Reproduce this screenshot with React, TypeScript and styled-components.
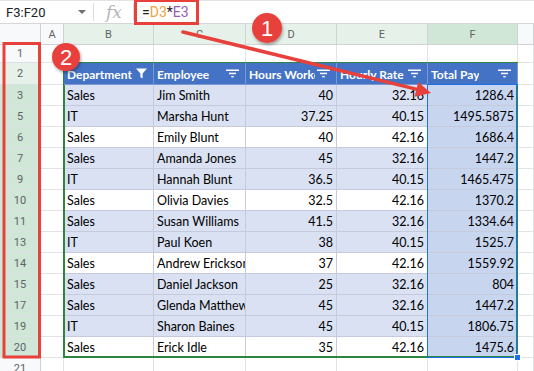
import { FC } from "react";
import styled, { createGlobalStyle } from "styled-components";

type Row = { n: number; dept: string; emp: string; hours: string; rate: string; total: string };
type Tone = "plain" | "light" | "dark";

const rows: Row[] = [
  { n: 3, dept: "Sales", emp: "Jim Smith", hours: "40", rate: "32.16", total: "1286.4" },
  { n: 5, dept: "IT", emp: "Marsha Hunt", hours: "37.25", rate: "40.15", total: "1495.5875" },
  { n: 6, dept: "Sales", emp: "Emily Blunt", hours: "40", rate: "42.16", total: "1686.4" },
  { n: 7, dept: "Sales", emp: "Amanda Jones", hours: "45", rate: "32.16", total: "1447.2" },
  { n: 9, dept: "IT", emp: "Hannah Blunt", hours: "36.5", rate: "40.15", total: "1465.475" },
  { n: 10, dept: "Sales", emp: "Olivia Davies", hours: "32.5", rate: "42.16", total: "1370.2" },
  { n: 11, dept: "Sales", emp: "Susan Williams", hours: "41.5", rate: "32.16", total: "1334.64" },
  { n: 13, dept: "IT", emp: "Paul Koen", hours: "38", rate: "40.15", total: "1525.7" },
  { n: 14, dept: "Sales", emp: "Andrew Erickson", hours: "37", rate: "42.16", total: "1559.92" },
  { n: 15, dept: "Sales", emp: "Daniel Jackson", hours: "25", rate: "32.16", total: "804" },
  { n: 17, dept: "Sales", emp: "Glenda Matthews", hours: "45", rate: "32.16", total: "1447.2" },
  { n: 19, dept: "IT", emp: "Sharon Baines", hours: "45", rate: "40.15", total: "1806.75" },
  { n: 20, dept: "Sales", emp: "Erick Idle", hours: "35", rate: "42.16", total: "1475.6" },
];

const columns: { label: string; tone: Tone }[] = [
  { label: "A", tone: "plain" },
  { label: "B", tone: "light" },
  { label: "C", tone: "light" },
  { label: "D", tone: "light" },
  { label: "E", tone: "light" },
  { label: "F", tone: "dark" },
];

const headers = ["Department", "Employee", "Hours Worked", "Hourly Rate", "Total Pay"];

const toneBg: Record<Tone, string> = {
  plain: "#f8f9fa",
  light: "#e6f2e9",
  dark: "#d0e6d6",
};

const GlobalStyle = createGlobalStyle`
  body {
    margin: 0;
    background: #ffffff;
  }
  * {
    box-sizing: border-box;
  }
`;

const FilterLines: FC = () => (
  <svg width="13" height="9" viewBox="0 0 13 9">
    <rect x="0" y="0.5" width="13" height="1.5" fill="#fff" />
    <rect x="3" y="3.7" width="7" height="1.5" fill="#fff" />
    <rect x="5.3" y="6.9" width="2.4" height="1.5" fill="#fff" />
  </svg>
);

const Funnel: FC = () => (
  <svg width="11" height="11" viewBox="0 0 11 11">
    <path d="M0 0.5 H11 L6.6 5.6 V10.5 L4.4 9.2 V5.6 Z" fill="#fff" />
  </svg>
);

const Annotations: FC = () => (
  <Overlay width="534" height="371" viewBox="0 0 534 371">
    <defs>
      <filter id="shade" x="-40%" y="-40%" width="180%" height="180%">
        <feDropShadow dx="1" dy="2" stdDeviation="1.5" floodColor="#000" floodOpacity="0.35" />
      </filter>
    </defs>
    <rect x="135.5" y="0.5" width="62" height="23" fill="none" stroke="#e8413c" strokeWidth="3" />
    <rect x="4" y="43.5" width="35.5" height="313.5" fill="none" stroke="#e8413c" strokeWidth="3" />
    <line x1="183" y1="32" x2="417" y2="89.4" stroke="#e8413c" strokeWidth="3.5" strokeLinecap="round" />
    <polygon points="431,93 414.6,96.7 418.2,82.1" fill="#e8413c" />
    <g filter="url(#shade)">
      <circle cx="267" cy="28" r="15" fill="#e8413c" />
      <circle cx="66" cy="57" r="14" fill="#e8413c" />
    </g>
    <BadgeText x="267" y="36">1</BadgeText>
    <BadgeText x="66" y="65">2</BadgeText>
  </Overlay>
);

const App: FC = () => {
  return (
    <Frame>
      <GlobalStyle />
      <FormulaBar>
        <NameBox>
          <span>F3:F20</span>
          <Caret />
        </NameBox>
        <FxLabel>fx</FxLabel>
        <Formula>
          =<RefD>D3</RefD>*<RefE>E3</RefE>
        </Formula>
      </FormulaBar>

      <Sheet>
        <ColHead $r={1} $c={1} $tone="plain" />
        {columns.map((col, i) => (
          <ColHead key={col.label} $r={1} $c={i + 2} $tone={col.tone}>
            {col.label}
          </ColHead>
        ))}
        <ColHead $r={1} $c={8} $tone="plain" />

        <RowHead $r={2} $tone="plain">1</RowHead>
        {[2, 3, 4, 5, 6, 7, 8].map((c) => (
          <Cell key={`r1-${c}`} $r={2} $c={c} $bg="#fff" />
        ))}

        <RowHead $r={3} $tone="light">2</RowHead>
        <Cell $r={3} $c={2} $bg="#fff" />
        {headers.map((h, i) => (
          <HeadCell key={h} $c={i + 3}>
            <HeadLabel>{h}</HeadLabel>
            <HeadIcon>{i === 0 ? <Funnel /> : <FilterLines />}</HeadIcon>
          </HeadCell>
        ))}
        <Cell $r={3} $c={8} $bg="#fff" />

        {rows.map((row, i) => {
          const r = i + 4;
          const bg = row.n % 2 === 1 ? "#d9e1f2" : "#ffffff";
          return [
            <RowHead key={`h${row.n}`} $r={r} $tone="dark">
              {row.n}
            </RowHead>,
            <Cell key={`a${row.n}`} $r={r} $c={2} $bg="#fff" />,
            <Cell key={`b${row.n}`} $r={r} $c={3} $bg={bg} $table>
              {row.dept}
            </Cell>,
            <Cell key={`c${row.n}`} $r={r} $c={4} $bg={bg} $table>
              {row.emp}
            </Cell>,
            <Cell key={`d${row.n}`} $r={r} $c={5} $bg={bg} $table $num>
              {row.hours}
            </Cell>,
            <Cell key={`e${row.n}`} $r={r} $c={6} $bg={bg} $table $num>
              {row.rate}
            </Cell>,
            <Cell key={`f${row.n}`} $r={r} $c={7} $bg="#c8d5ef" $table $num>
              {row.total}
            </Cell>,
            <Cell key={`g${row.n}`} $r={r} $c={8} $bg="#fff" />,
          ];
        })}

        <RowHead $r={17} $tone="plain">21</RowHead>
        {[2, 3, 4, 5, 6, 7, 8].map((c) => (
          <Cell key={`r21-${c}`} $r={17} $c={c} $bg="#fff" />
        ))}

        <Selection>
          <FillHandle />
        </Selection>
        <TableFrame />
      </Sheet>

      <Annotations />
    </Frame>
  );
};

export default App;

const Frame = styled.div`
  position: relative;
  width: 534px;
  height: 371px;
  overflow: hidden;
  background: #fff;
  font-family: Lato, "Liberation Sans", sans-serif;
`;

const FormulaBar = styled.div`
  display: flex;
  align-items: center;
  height: 24px;
  border-top: 1px solid #e3e3e3;
  border-bottom: 1px solid #d6d6d6;
  font-family: Roboto, "Liberation Sans", sans-serif;
`;

const NameBox = styled.div`
  display: flex;
  align-items: center;
  justify-content: space-between;
  width: 94px;
  height: 18px;
  padding: 0 7px 0 6px;
  border-right: 1px solid #dadce0;
  font-size: 13px;
  color: #202124;
`;

const Caret = styled.span`
  width: 0;
  height: 0;
  border-left: 4.5px solid transparent;
  border-right: 4.5px solid transparent;
  border-top: 4.5px solid #6f6f6f;
`;

const FxLabel = styled.span`
  width: 40px;
  height: 18px;
  padding-left: 12px;
  border-right: 1px solid #dadce0;
  font-family: "DejaVu Serif", "Liberation Serif", serif;
  font-style: italic;
  font-size: 17px;
  line-height: 18px;
  color: #b4b4b4;
`;

const Formula = styled.span`
  padding-left: 8px;
  font-size: 14px;
  color: #202124;
`;

const RefD = styled.span`
  color: #f2a23a;
`;

const RefE = styled.span`
  color: #9a5cb4;
`;

const Sheet = styled.div`
  display: grid;
  grid-template-columns: 41px 23px 90px 92px 91px 91px 90px 16px;
  grid-template-rows: 21px 18px 22px repeat(13, 21px) 21px;
`;

const ColHead = styled.div<{ $r: number; $c: number; $tone: Tone }>`
  grid-row: ${(p) => p.$r};
  grid-column: ${(p) => p.$c};
  display: flex;
  align-items: center;
  justify-content: center;
  background: ${(p) => toneBg[p.$tone]};
  border-right: 1px solid #cfd3d6;
  border-bottom: 1px solid #cfd3d6;
  font-family: Roboto, "Liberation Sans", sans-serif;
  font-size: 11px;
  color: #5f6368;
`;

const RowHead = styled.div<{ $r: number; $tone: Tone }>`
  grid-row: ${(p) => p.$r};
  grid-column: 1;
  display: flex;
  align-items: center;
  justify-content: center;
  background: ${(p) => toneBg[p.$tone]};
  border-right: 1px solid #cfd3d6;
  border-bottom: 1px solid #dde1e3;
  font-family: Roboto, "Liberation Sans", sans-serif;
  font-size: 11px;
  color: #5f6368;
`;

const Cell = styled.div<{ $r: number; $c: number; $bg: string; $table?: boolean; $num?: boolean }>`
  grid-row: ${(p) => p.$r};
  grid-column: ${(p) => p.$c};
  display: flex;
  align-items: flex-end;
  justify-content: ${(p) => (p.$num ? "flex-end" : "flex-start")};
  overflow: hidden;
  white-space: nowrap;
  padding: 0 3px 2px 3px;
  background: ${(p) => p.$bg};
  border-right: 1px solid ${(p) => (p.$table ? "#c5cbdc" : "#e2e3e3")};
  border-bottom: 1px solid ${(p) => (p.$table ? "#c5cbdc" : "#e2e3e3")};
  font-size: 12.5px;
  color: #000;
`;

const HeadCell = styled.div<{ $c: number }>`
  grid-row: 3;
  grid-column: ${(p) => p.$c};
  position: relative;
  display: flex;
  align-items: center;
  overflow: hidden;
  white-space: nowrap;
  padding: 1px 3px 0 3px;
  background: #4472c4;
  border-right: 1px solid #7b98d3;
  border-bottom: 1px solid #7b98d3;
  font-size: 12px;
  font-weight: 700;
  color: #fff;
`;

const HeadLabel = styled.span`
  overflow: hidden;
`;

const HeadIcon = styled.span`
  position: absolute;
  right: 0;
  top: 0;
  bottom: 0;
  display: flex;
  align-items: center;
  padding: 0 6px 0 2px;
  background: #4472c4;
`;

const Selection = styled.div`
  grid-row: 4 / 17;
  grid-column: 7;
  position: relative;
  border: 1px solid #1a73e8;
  margin: -1px 0 0 -1px;
  pointer-events: none;
`;

const FillHandle = styled.span`
  position: absolute;
  right: -4px;
  bottom: -4px;
  width: 7px;
  height: 7px;
  background: #1a73e8;
  border: 1px solid #fff;
  z-index: 2;
`;

const TableFrame = styled.div`
  grid-row: 3 / 17;
  grid-column: 3 / 8;
  margin: -1px 0 0 -1px;
  border: 2px solid #2e8540;
  pointer-events: none;
`;

const Overlay = styled.svg`
  position: absolute;
  left: 0;
  top: 0;
  pointer-events: none;
`;

const BadgeText = styled.text`
  font-family: "Liberation Sans", Arial, sans-serif;
  font-size: 22px;
  fill: #fff;
  text-anchor: middle;
`;
